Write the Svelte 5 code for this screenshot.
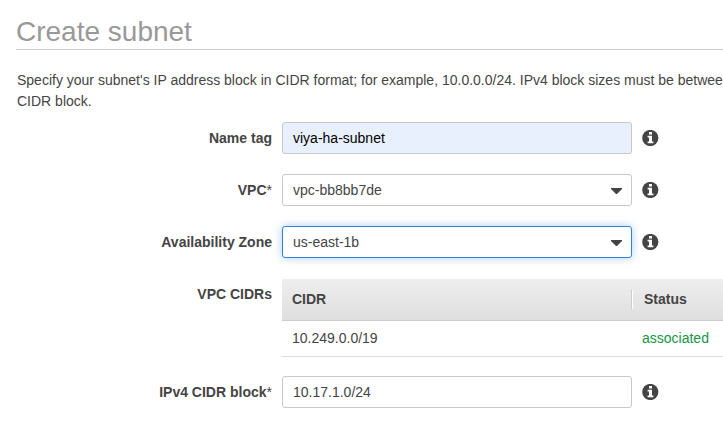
<script>
  const fields = [
    { label: 'Name tag', value: 'viya-ha-subnet', kind: 'filled' },
    { label: 'VPC', required: true, value: 'vpc-bb8bb7de', kind: 'select' },
    { label: 'Availability Zone', value: 'us-east-1b', kind: 'select', focused: true }
  ];
  const block = { label: 'IPv4 CIDR block', required: true, value: '10.17.1.0/24', kind: 'text' };
  const cidrs = [{ cidr: '10.249.0.0/19', status: 'associated' }];
</script>

{#snippet row(field)}
  <div class="row">
    <div class="label">{field.label}{#if field.required}<span class="star">*</span>{/if}</div>
    <div class="box" class:filled={field.kind === 'filled'} class:focused={field.focused}>
      <span>{field.value}</span>
      {#if field.kind === 'select'}
        <svg class="caret" width="11" height="6" viewBox="0 0 11 6"><path d="M0 0H11V1L6 6H5L0 1Z" fill="#444" /></svg>
      {/if}
    </div>
    <svg class="info" width="17" height="16" viewBox="0 0 17 16">
      <circle cx="8.3" cy="8" r="8.1" fill="#444" />
      <path d="M7 2H10V4.4H7ZM5.6 5.7H10V11.4H11.4V13.3H5.6V11.4H7V7.5H5.6Z" fill="#fff" />
    </svg>
  </div>
{/snippet}

<main>
  <h1>Create subnet</h1>
  <p>
    Specify your subnet's IP address block in CIDR format; for example, 10.0.0.0/24. IPv4 block sizes must be betwee<br />CIDR block.
  </p>
  <form>
    {#each fields as field}
      {@render row(field)}
    {/each}
    <div class="row cidrs">
      <div class="label">VPC CIDRs</div>
      <div class="table">
        <div class="head">
          <div class="first">CIDR</div>
          <div class="status">Status</div>
        </div>
        {#each cidrs as item}
          <div class="line">
            <div class="first">{item.cidr}</div>
            <div class="state">{item.status}</div>
          </div>
        {/each}
      </div>
    </div>
    {@render row(block)}
  </form>
</main>

<style>
  :global(body) {
    background: #fff;
    overflow: hidden;
  }
  main {
    box-sizing: border-box;
    width: 723px;
    height: 421px;
    padding: 14px 0 0 16px;
    overflow: hidden;
    font: 14px/21px "Liberation Sans", Arial, sans-serif;
    color: #444;
  }
  h1 {
    box-sizing: border-box;
    height: 36px;
    margin: 0;
    border-bottom: 1px solid #ccc;
    font-size: 28px;
    font-weight: 400;
    line-height: 35px;
    color: #999;
  }
  p {
    margin: 20px 0 10px;
    padding-left: 1px;
    white-space: nowrap;
  }
  .row {
    display: flex;
    align-items: center;
    height: 32px;
    margin-bottom: 20px;
  }
  .label {
    flex: none;
    width: 256px;
    margin-right: 10px;
    text-align: right;
    font-weight: 700;
  }
  .star {
    font-weight: 400;
  }
  .box {
    box-sizing: border-box;
    flex: none;
    display: flex;
    align-items: center;
    justify-content: space-between;
    width: 350px;
    height: 32px;
    padding: 0 9px 0 10px;
    border: 1px solid #c8c8c8;
    border-radius: 3px;
    background: #fff;
  }
  .filled {
    background: #e8f0fe;
    color: #000;
  }
  .focused {
    border-color: #2f83d8;
    box-shadow: 0 0 8px rgba(47, 131, 216, 0.4);
  }
  .caret {
    margin-top: 2px;
  }
  .info {
    flex: none;
    margin-left: 10px;
  }
  .cidrs {
    align-items: flex-start;
    height: 78px;
    margin: 21px 0 19px;
  }
  .cidrs .label {
    padding-top: 5px;
  }
  .table {
    flex: 1;
  }
  .head,
  .line {
    box-sizing: border-box;
    display: flex;
    align-items: center;
  }
  .head {
    height: 42px;
    border-bottom: 1px solid #ccc;
    background: linear-gradient(#eee, #dfdfdf);
    font-weight: 700;
  }
  .line {
    height: 36px;
    border-bottom: 1px solid #ddd;
  }
  .first {
    box-sizing: border-box;
    width: 349px;
    padding-left: 10px;
  }
  .status {
    height: 19px;
    padding-left: 12px;
    border-left: 1px solid #ccc;
    box-shadow: inset 1px 0 #fff;
    line-height: 18px;
  }
  .state {
    padding-left: 11px;
    color: #149644;
  }
</style>
